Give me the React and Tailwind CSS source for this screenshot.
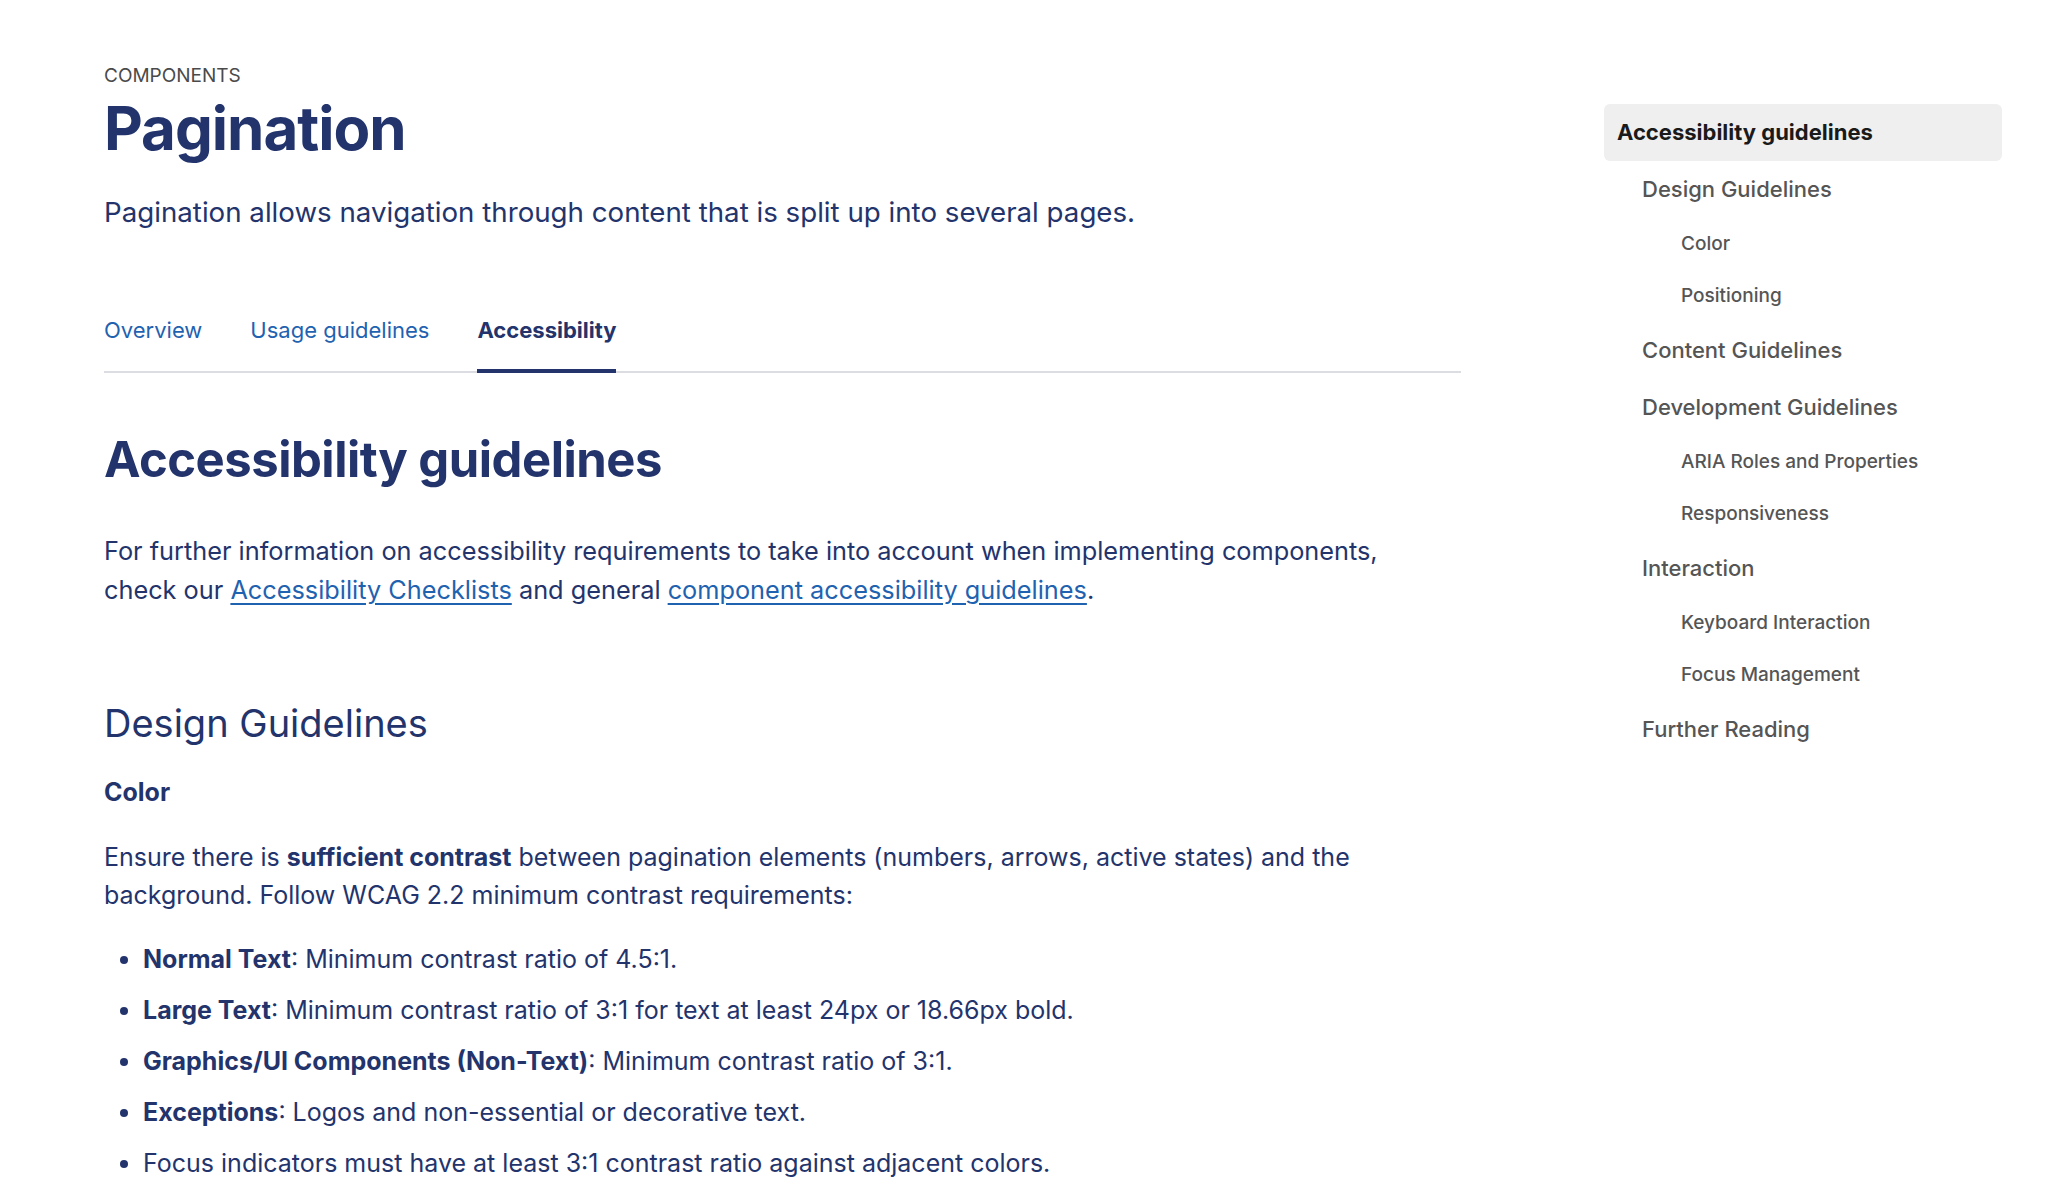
import React from 'react';

const toc = [
  { label: 'Design Guidelines', level: 2 },
  { label: 'Color', level: 3 },
  { label: 'Positioning', level: 3 },
  { label: 'Content Guidelines', level: 2 },
  { label: 'Development Guidelines', level: 2 },
  { label: 'ARIA Roles and Properties', level: 3 },
  { label: 'Responsiveness', level: 3 },
  { label: 'Interaction', level: 2 },
  { label: 'Keyboard Interaction', level: 3 },
  { label: 'Focus Management', level: 3 },
  { label: 'Further Reading', level: 2 },
];

const contrastRules = [
  { term: 'Normal Text', text: ': Minimum contrast ratio of 4.5:1.' },
  { term: 'Large Text', text: ': Minimum contrast ratio of 3:1 for text at least 24px or 18.66px bold.' },
  { term: 'Graphics/UI Components (Non-Text)', text: ': Minimum contrast ratio of 3:1.' },
  { term: 'Exceptions', text: ': Logos and non-essential or decorative text.' },
  { term: null, text: 'Focus indicators must have at least 3:1 contrast ratio against adjacent colors.' },
];

const tabs = ['Overview', 'Usage guidelines', 'Accessibility'];

const App = () => {
  return (
    <div className="flex min-h-screen bg-white pl-[104px] pr-[62px] font-['Inter','Liberation_Sans',sans-serif] text-[#23346c]">
      <main className="w-[1357px] shrink-0 pt-[62px]">
        <p className="text-[19px] leading-[28px] text-[#4a4a4a]">COMPONENTS</p>
        <h1 className="mt-[2px] text-[60px] font-bold leading-[72px] tracking-[-1px]">Pagination</h1>
        <p className="mt-[30px] text-[27.7px] leading-[36px]">
          Pagination allows navigation through content that is split up into several pages.
        </p>

        <div className="mt-[84px] flex gap-[48px] border-b-2 border-[#dcdde3]">
          {tabs.map((tab) => (
            <button
              key={tab}
              className={`-mb-[2px] border-b-4 pb-[23px] text-[22px] leading-[32px] ${
                tab === 'Accessibility' ? 'border-[#23346c] font-bold text-[#23346c]' : 'border-transparent text-[#1f62b0]'
              }`}
            >
              {tab}
            </button>
          ))}
        </div>

        <h2 className="mt-[55px] text-[49px] font-bold leading-[64px] tracking-[-0.5px]">Accessibility guidelines</h2>
        <p className="mt-[39px] max-w-[1300px] text-[25.3px] leading-[39px]">
          For further information on accessibility requirements to take into account when implementing components,
          check our{' '}
          <a href="#" className="text-[#1f62b0] underline underline-offset-4">Accessibility Checklists</a>{' '}
          and general{' '}
          <a href="#" className="text-[#1f62b0] underline underline-offset-4">component accessibility guidelines</a>.
        </p>

        <h3 className="mt-[88px] text-[38px] leading-[52px]">Design Guidelines</h3>
        <h4 className="mt-[25px] text-[25px] font-bold leading-[36px]">Color</h4>
        <p className="mt-[28px] text-[25px] leading-[38px]">
          Ensure there is <strong>sufficient contrast</strong> between pagination elements (numbers, arrows, active
          states) and the background. Follow WCAG 2.2 minimum contrast requirements:
        </p>
        <ul className="mt-[25px] flex flex-col gap-[11px] pl-[39px]">
          {contrastRules.map((rule, i) => (
            <li key={i} className="list-disc text-[25px] leading-[40px] marker:text-[#23346c]">
              {rule.term && <strong>{rule.term}</strong>}
              {rule.text}
            </li>
          ))}
        </ul>
      </main>

      <aside className="ml-[143px] w-[398px] shrink-0 pt-[104px]">
        <div className="flex h-[57px] items-center rounded-[6px] bg-[#efefef] px-[13px] text-[22px] font-bold text-[#1a1a1a]">
          Accessibility guidelines
        </div>
        <nav className="flex flex-col">
          {toc.map((item) => (
            <a
              key={item.label}
              href="#"
              className={
                item.level === 2
                  ? 'flex h-[57px] items-center pl-[38px] text-[22px] font-medium text-[#555555]'
                  : 'flex h-[52px] items-center pl-[77px] text-[19px] font-medium text-[#555555]'
              }
            >
              {item.label}
            </a>
          ))}
        </nav>
      </aside>
    </div>
  );
};

export default App;
